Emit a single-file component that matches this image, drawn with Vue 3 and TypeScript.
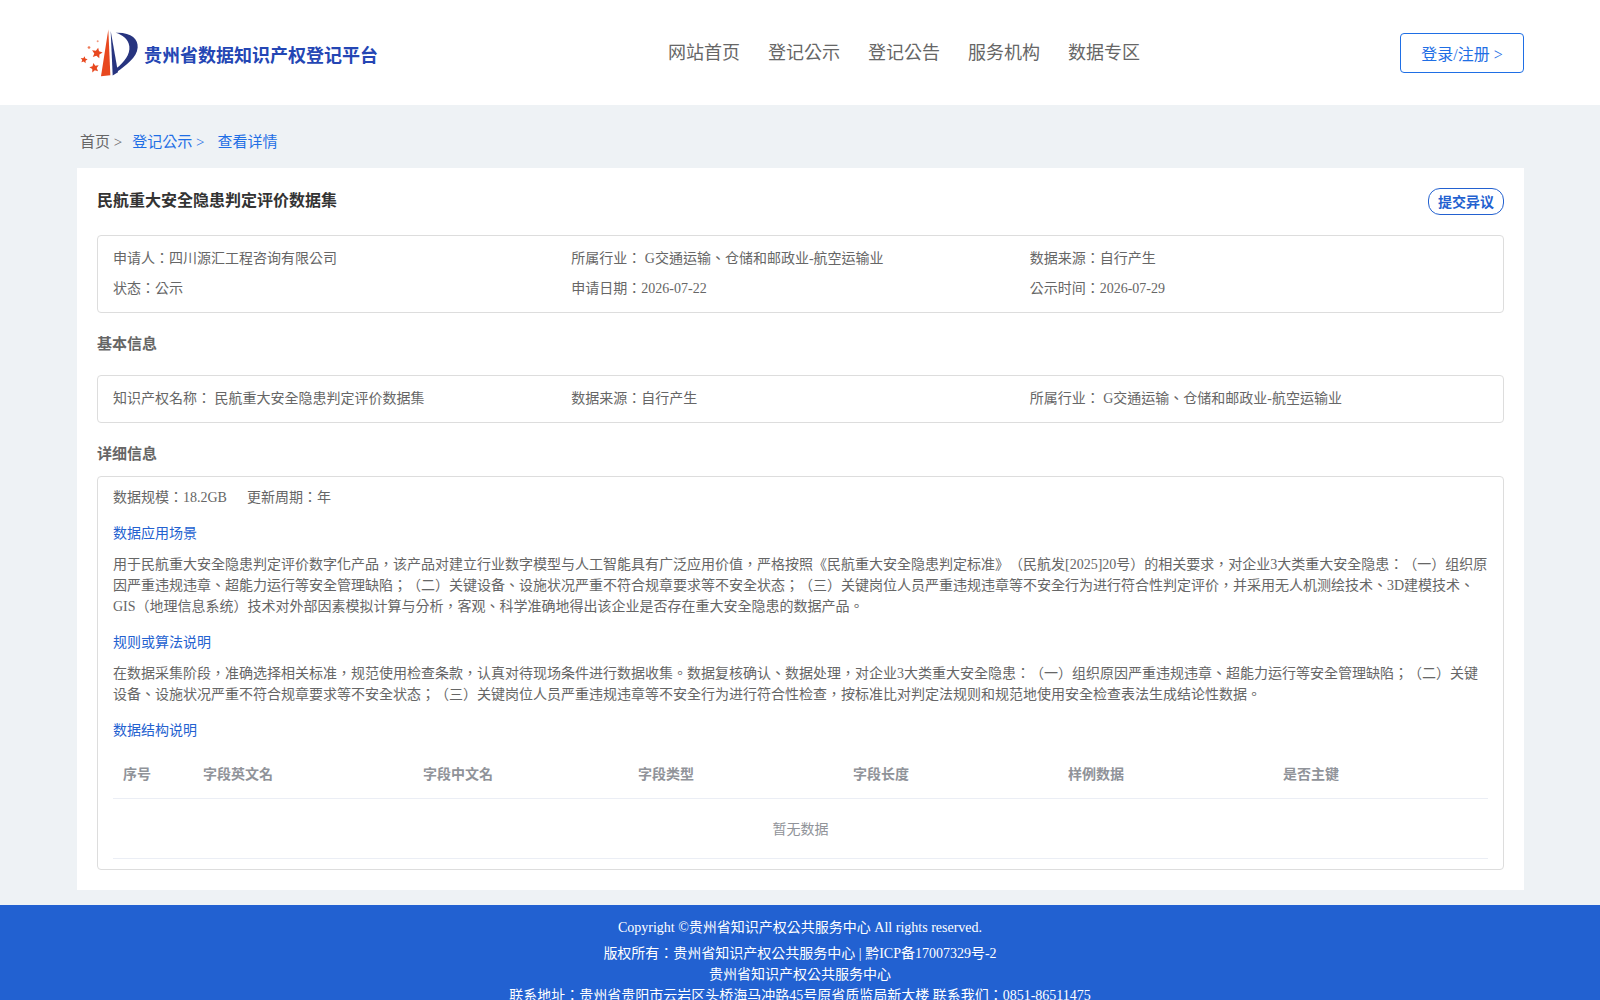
<template>
  <div class="page">
    <header class="header">
      <div class="header__inner">
        <div class="brand">
          <svg class="brand__logo" viewBox="15 15 180 155" aria-hidden="true">
            <polygon points="100,22 78,162 106,159" fill="#e8481f" />
            <polygon points="107,26 113,160 129,150" fill="#27347f" />
            <path
              d="M122 32C168 30 190 50 188 76C186 106 152 130 126 149L123 139C148 120 166 96 163 72C160 50 142 38 122 32Z"
              fill="#27347f"
            />
            <polygon v-for="(s, i) in stars" :key="i" :points="s" fill="#e8481f" />
            <circle cx="42" cy="76" r="4" fill="#ee7a58" />
            <circle cx="68" cy="57" r="3" fill="#f09a80" />
          </svg>
          <span class="brand__name">贵州省数据知识产权登记平台</span>
        </div>
        <nav class="nav">
          <a v-for="item in navItems" :key="item" class="nav__item">{{ item }}</a>
        </nav>
        <button class="login" type="button">登录/注册 &gt;</button>
      </div>
    </header>

    <main class="main">
      <div class="crumbs">
        <span>首页 &gt;</span>
        <a class="crumbs__link">登记公示 &gt;</a>
        <a class="crumbs__link crumbs__link--last">查看详情</a>
      </div>

      <section class="card">
        <div class="card__head">
          <h1 class="card__title">民航重大安全隐患判定评价数据集</h1>
          <button class="objection" type="button">提交异议</button>
        </div>

        <div class="box box--summary">
          <div v-for="cell in summary" :key="cell" class="box__cell">{{ cell }}</div>
        </div>

        <h2 class="section-title">基本信息</h2>
        <div class="box box--basic">
          <div v-for="cell in basic" :key="cell" class="box__cell">{{ cell }}</div>
        </div>

        <h2 class="section-title section-title--detail">详细信息</h2>
        <div class="detail">
          <div class="detail__meta">
            <span>数据规模：18.2GB</span>
            <span>更新周期：年</span>
          </div>

          <h3 class="detail__label">数据应用场景</h3>
          <p class="detail__text">用于民航重大安全隐患判定评价数字化产品，该产品对建立行业数字模型与人工智能具有广泛应用价值，严格按照《民航重大安全隐患判定标准》（民航发[2025]20号）的相关要求，对企业3大类重大安全隐患：（一）组织原因严重违规违章、超能力运行等安全管理缺陷；（二）关键设备、设施状况严重不符合规章要求等不安全状态；（三）关键岗位人员严重违规违章等不安全行为进行符合性判定评价，并采用无人机测绘技术、3D建模技术、GIS（地理信息系统）技术对外部因素模拟计算与分析，客观、科学准确地得出该企业是否存在重大安全隐患的数据产品。</p>

          <h3 class="detail__label">规则或算法说明</h3>
          <p class="detail__text">在数据采集阶段，准确选择相关标准，规范使用检查条款，认真对待现场条件进行数据收集。数据复核确认、数据处理，对企业3大类重大安全隐患：（一）组织原因严重违规违章、超能力运行等安全管理缺陷；（二）关键设备、设施状况严重不符合规章要求等不安全状态；（三）关键岗位人员严重违规违章等不安全行为进行符合性检查，按标准比对判定法规则和规范地使用安全检查表法生成结论性数据。</p>

          <h3 class="detail__label">数据结构说明</h3>
          <div class="table">
            <div class="table__head">
              <div v-for="col in columns" :key="col" class="table__th">{{ col }}</div>
            </div>
            <div class="table__empty">暂无数据</div>
          </div>
        </div>
      </section>
    </main>

    <footer class="footer">
      <p class="footer__copy">Copyright ©贵州省知识产权公共服务中心 All rights reserved.</p>
      <p>版权所有：贵州省知识产权公共服务中心 | 黔ICP备17007329号-2</p>
      <p>贵州省知识产权公共服务中心</p>
      <p>联系地址：贵州省贵阳市云岩区头桥海马冲路45号原省质监局新大楼 联系我们：0851-86511475</p>
    </footer>
  </div>
</template>

<script setup lang="ts">
// five-point star as polygon points
function star(cx: number, cy: number, r: number, rot: number): string {
  const pts: string[] = []
  for (let i = 0; i < 10; i++) {
    const rad = i % 2 === 0 ? r : r * 0.48
    const a = ((rot + i * 36 - 90) * Math.PI) / 180
    pts.push(`${(cx + rad * Math.cos(a)).toFixed(1)},${(cy + rad * Math.sin(a)).toFixed(1)}`)
  }
  return pts.join(' ')
}

const stars = [star(66, 93, 17, 12), star(58, 137, 15, -12), star(27, 113, 11, 10)]

const navItems = ['网站首页', '登记公示', '登记公告', '服务机构', '数据专区']

const summary = [
  '申请人：四川源汇工程咨询有限公司',
  '所属行业： G交通运输、仓储和邮政业-航空运输业',
  '数据来源：自行产生',
  '状态：公示',
  '申请日期：2026-07-22',
  '公示时间：2026-07-29',
]

const basic = [
  '知识产权名称： 民航重大安全隐患判定评价数据集',
  '数据来源：自行产生',
  '所属行业： G交通运输、仓储和邮政业-航空运输业',
]

const columns = ['序号', '字段英文名', '字段中文名', '字段类型', '字段长度', '样例数据', '是否主键']
</script>

<style>
html,
body {
  height: 100%;
  overflow: hidden;
}
</style>

<style scoped>
.page {
  font-family: "Liberation Serif", "Noto Sans CJK TC", serif;
  font-size: 14px;
  color: #666;
  background: #eef2f5;
  text-spacing-trim: space-all;
}

.header {
  height: 105px;
  background: #fff;
}

.header__inner {
  display: flex;
  align-items: center;
  width: 1447px;
  height: 100%;
  margin-left: 77px;
}

.brand {
  display: flex;
  align-items: center;
  gap: 4px;
  flex: 0 0 591px;
  padding-left: 3px;
  box-sizing: border-box;
}

.brand__logo {
  width: 60px;
  height: 52px;
}

.brand__name {
  margin-top: 2px;
  font-size: 18px;
  font-weight: 700;
  color: #2446b4;
}

.nav {
  display: flex;
  gap: 28px;
  margin-bottom: 4px;
}

.nav__item {
  font-size: 18px;
  color: #666;
}

.login {
  width: 124px;
  height: 40px;
  margin-left: auto;
  padding: 0;
  border: 1px solid #1f6fe5;
  border-radius: 4px;
  background: #fff;
  color: #1f6fe5;
  font: inherit;
  font-size: 16px;
}

.main {
  width: 1447px;
  margin-left: 77px;
  padding-bottom: 15px;
}

.crumbs {
  display: flex;
  align-items: center;
  height: 63px;
  padding: 8px 0 0 3px;
  box-sizing: border-box;
  font-size: 15px;
}

.crumbs__link {
  margin-left: 10px;
  color: #1f6fe5;
}

.crumbs__link--last {
  margin-left: 13px;
}

.card {
  padding: 20px;
  background: #fff;
}

.card__head {
  display: flex;
  align-items: flex-start;
  justify-content: space-between;
  height: 47px;
}

.card__title {
  margin: 1px 0 0;
  font-size: 16px;
  line-height: 24px;
  font-weight: 700;
  color: #333;
}

.objection {
  width: 76px;
  height: 27px;
  padding: 0 0 2px;
  border: 1px solid #2361d0;
  border-radius: 12px;
  background: #fff;
  color: #2361d0;
  font: inherit;
  font-size: 14px;
  font-weight: 700;
}

.box {
  display: grid;
  grid-template-columns: repeat(3, 1fr);
  padding: 0 15px;
  border: 1px solid #ddd;
  border-radius: 4px;
}

.box--summary {
  padding-top: 8px;
  padding-bottom: 8px;
}

.box--basic {
  padding-top: 8px;
  padding-bottom: 8px;
}

.box__cell {
  height: 30px;
  line-height: 30px;
}

.section-title {
  margin: 0;
  height: 62px;
  line-height: 63px;
  font-size: 15px;
  font-weight: 700;
  color: #666;
}

.section-title--detail {
  height: 53px;
  line-height: 63px;
}

.detail {
  padding: 10px 15px;
  border: 1px solid #ddd;
  border-radius: 4px;
}

.detail__meta {
  display: flex;
  gap: 20px;
  line-height: 21px;
}

.detail__label {
  margin: 15px 0 10px;
  font-size: 14px;
  line-height: 21px;
  font-weight: 400;
  color: #2361d0;
}

.detail__text {
  margin: 0;
  line-height: 21px;
}

.table {
  margin-top: 12px;
  border-bottom: 1px solid #ebeef5;
}

.table__head {
  display: grid;
  grid-template-columns: 80px 220px repeat(5, 215px);
  height: 45px;
  border-bottom: 1px solid #ebeef5;
}

.table__th {
  padding-left: 10px;
  line-height: 44px;
  font-weight: 700;
  color: #909399;
}

.table__empty {
  height: 59px;
  line-height: 61px;
  text-align: center;
  color: #909399;
}

.footer {
  padding: 12px 0 0;
  background: #2261d1;
  color: #fff;
  text-align: center;
  line-height: 21px;
}

.footer p {
  margin: 0;
}

.footer .footer__copy {
  margin-bottom: 5px;
}
</style>
